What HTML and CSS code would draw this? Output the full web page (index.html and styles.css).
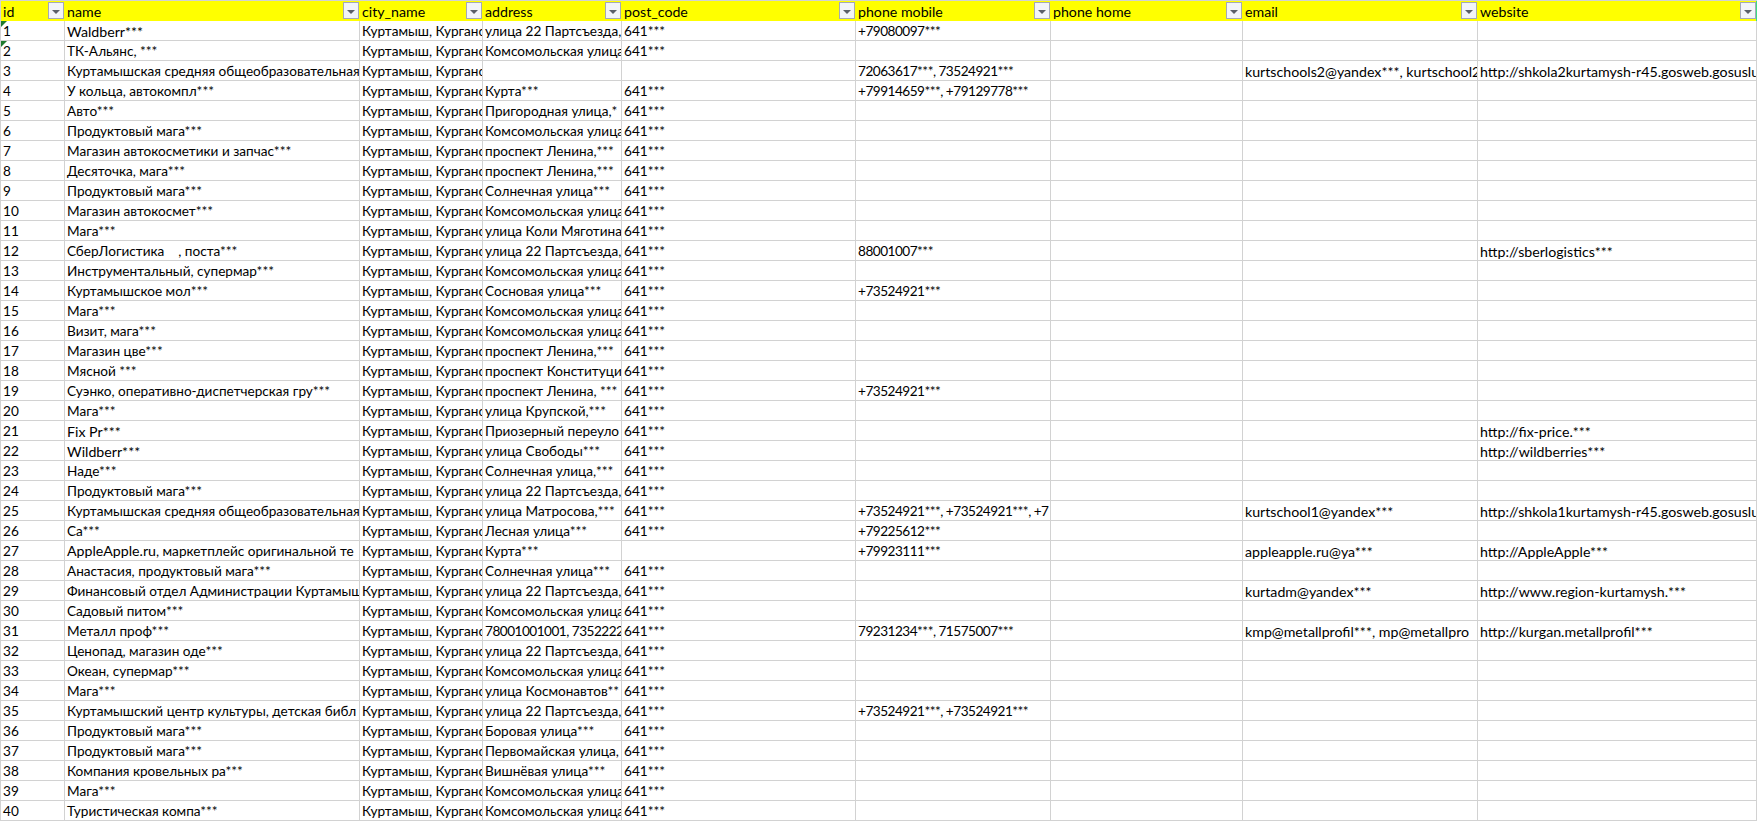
FILE: index.html
```html
<!DOCTYPE html>
<html lang="ru">
<head>
<meta charset="utf-8">
<title>Куртамыш</title>
<link rel="stylesheet" href="styles.css">
</head>
<body>
<table class="sheet">
<colgroup><col class="c-id"><col class="c-name"><col class="c-city"><col class="c-addr"><col class="c-post"><col class="c-mob"><col class="c-home"><col class="c-mail"><col class="c-web"></colgroup>
<thead>
<tr>
<th><div class="head"><span class="label">id</span><span class="filter"></span></div></th>
<th><div class="head"><span class="label">name</span><span class="filter"></span></div></th>
<th><div class="head"><span class="label">city_name</span><span class="filter"></span></div></th>
<th><div class="head"><span class="label">address</span><span class="filter"></span></div></th>
<th><div class="head"><span class="label">post_code</span><span class="filter"></span></div></th>
<th><div class="head"><span class="label">phone mobile</span><span class="filter"></span></div></th>
<th><div class="head"><span class="label">phone home</span><span class="filter"></span></div></th>
<th><div class="head"><span class="label">email</span><span class="filter"></span></div></th>
<th><div class="head"><span class="label">website</span><span class="filter"></span></div></th>
</tr>
</thead>
<tbody>
<tr><td class="flag">1</td><td class="en">Waldberr***</td><td>Куртамыш, Курганс</td><td>улица 22 Партсъезда,</td><td>641***</td><td>+79080097***</td><td></td><td></td><td></td></tr>
<tr><td class="flag">2</td><td>ТК-Альянс, ***</td><td>Куртамыш, Курганс</td><td>Комсомольская улица</td><td>641***</td><td></td><td></td><td></td><td></td></tr>
<tr><td>3</td><td>Куртамышская средняя общеобразовательная</td><td>Куртамыш, Курганс</td><td></td><td></td><td>72063617***, 73524921***</td><td></td><td>kurtschools2@yandex***, kurtschool2</td><td>http://shkola2kurtamysh-r45.gosweb.gosuslu</td></tr>
<tr><td>4</td><td>У кольца, автокомпл***</td><td>Куртамыш, Курганс</td><td>Курта***</td><td>641***</td><td>+79914659***, +79129778***</td><td></td><td></td><td></td></tr>
<tr><td>5</td><td>Авто***</td><td>Куртамыш, Курганс</td><td>Пригородная улица,*</td><td>641***</td><td></td><td></td><td></td><td></td></tr>
<tr><td>6</td><td>Продуктовый мага***</td><td>Куртамыш, Курганс</td><td>Комсомольская улица</td><td>641***</td><td></td><td></td><td></td><td></td></tr>
<tr><td>7</td><td>Магазин автокосметики и запчас***</td><td>Куртамыш, Курганс</td><td>проспект Ленина,***</td><td>641***</td><td></td><td></td><td></td><td></td></tr>
<tr><td>8</td><td>Десяточка, мага***</td><td>Куртамыш, Курганс</td><td>проспект Ленина,***</td><td>641***</td><td></td><td></td><td></td><td></td></tr>
<tr><td>9</td><td>Продуктовый мага***</td><td>Куртамыш, Курганс</td><td>Солнечная улица***</td><td>641***</td><td></td><td></td><td></td><td></td></tr>
<tr><td>10</td><td>Магазин автокосмет***</td><td>Куртамыш, Курганс</td><td>Комсомольская улица</td><td>641***</td><td></td><td></td><td></td><td></td></tr>
<tr><td>11</td><td>Мага***</td><td>Куртамыш, Курганс</td><td>улица Коли Мяготина</td><td>641***</td><td></td><td></td><td></td><td></td></tr>
<tr><td>12</td><td>СберЛогистика &nbsp; &nbsp;, поста***</td><td>Куртамыш, Курганс</td><td>улица 22 Партсъезда,</td><td>641***</td><td>88001007***</td><td></td><td></td><td>http://sberlogistics***</td></tr>
<tr><td>13</td><td>Инструментальный, супермар***</td><td>Куртамыш, Курганс</td><td>Комсомольская улица</td><td>641***</td><td></td><td></td><td></td><td></td></tr>
<tr><td>14</td><td>Куртамышское мол***</td><td>Куртамыш, Курганс</td><td>Сосновая улица***</td><td>641***</td><td>+73524921***</td><td></td><td></td><td></td></tr>
<tr><td>15</td><td>Мага***</td><td>Куртамыш, Курганс</td><td>Комсомольская улица</td><td>641***</td><td></td><td></td><td></td><td></td></tr>
<tr><td>16</td><td>Визит, мага***</td><td>Куртамыш, Курганс</td><td>Комсомольская улица</td><td>641***</td><td></td><td></td><td></td><td></td></tr>
<tr><td>17</td><td>Магазин цве***</td><td>Куртамыш, Курганс</td><td>проспект Ленина,***</td><td>641***</td><td></td><td></td><td></td><td></td></tr>
<tr><td>18</td><td>Мясной ***</td><td>Куртамыш, Курганс</td><td>проспект Конституци</td><td>641***</td><td></td><td></td><td></td><td></td></tr>
<tr><td>19</td><td>Суэнко, оперативно-диспетчерская гру***</td><td>Куртамыш, Курганс</td><td>проспект Ленина, ***</td><td>641***</td><td>+73524921***</td><td></td><td></td><td></td></tr>
<tr><td>20</td><td>Мага***</td><td>Куртамыш, Курганс</td><td>улица Крупской,***</td><td>641***</td><td></td><td></td><td></td><td></td></tr>
<tr><td>21</td><td class="en">Fix Pr***</td><td>Куртамыш, Курганс</td><td>Приозерный переуло</td><td>641***</td><td></td><td></td><td></td><td>http://fix-price.***</td></tr>
<tr><td>22</td><td class="en">Wildberr***</td><td>Куртамыш, Курганс</td><td>улица Свободы***</td><td>641***</td><td></td><td></td><td></td><td>http://wildberries***</td></tr>
<tr><td>23</td><td>Наде***</td><td>Куртамыш, Курганс</td><td>Солнечная улица,***</td><td>641***</td><td></td><td></td><td></td><td></td></tr>
<tr><td>24</td><td>Продуктовый мага***</td><td>Куртамыш, Курганс</td><td>улица 22 Партсъезда,</td><td>641***</td><td></td><td></td><td></td><td></td></tr>
<tr><td>25</td><td>Куртамышская средняя общеобразовательная</td><td>Куртамыш, Курганс</td><td>улица Матросова,***</td><td>641***</td><td>+73524921***, +73524921***, +7</td><td></td><td>kurtschool1@yandex***</td><td>http://shkola1kurtamysh-r45.gosweb.gosuslu</td></tr>
<tr><td>26</td><td>Са***</td><td>Куртамыш, Курганс</td><td>Лесная улица***</td><td>641***</td><td>+79225612***</td><td></td><td></td><td></td></tr>
<tr><td>27</td><td><span class="en">AppleApple.ru</span>, маркетплейс оригинальной те</td><td>Куртамыш, Курганс</td><td>Курта***</td><td></td><td>+79923111***</td><td></td><td>appleapple.ru@ya***</td><td>http://AppleApple***</td></tr>
<tr><td>28</td><td>Анастасия, продуктовый мага***</td><td>Куртамыш, Курганс</td><td>Солнечная улица***</td><td>641***</td><td></td><td></td><td></td><td></td></tr>
<tr><td>29</td><td>Финансовый отдел Администрации Куртамыш</td><td>Куртамыш, Курганс</td><td>улица 22 Партсъезда,</td><td>641***</td><td></td><td></td><td>kurtadm@yandex***</td><td>http://www.region-kurtamysh.***</td></tr>
<tr><td>30</td><td>Садовый питом***</td><td>Куртамыш, Курганс</td><td>Комсомольская улица</td><td>641***</td><td></td><td></td><td></td><td></td></tr>
<tr><td>31</td><td>Металл проф***</td><td>Куртамыш, Курганс</td><td class="tight">78001001001, 7352222</td><td>641***</td><td>79231234***, 71575007***</td><td></td><td>kmp@metallprofil***, mp@metallpro</td><td>http://kurgan.metallprofil***</td></tr>
<tr><td>32</td><td>Ценопад, магазин оде***</td><td>Куртамыш, Курганс</td><td>улица 22 Партсъезда,</td><td>641***</td><td></td><td></td><td></td><td></td></tr>
<tr><td>33</td><td>Океан, супермар***</td><td>Куртамыш, Курганс</td><td>Комсомольская улица</td><td>641***</td><td></td><td></td><td></td><td></td></tr>
<tr><td>34</td><td>Мага***</td><td>Куртамыш, Курганс</td><td>улица Космонавтов**</td><td>641***</td><td></td><td></td><td></td><td></td></tr>
<tr><td>35</td><td>Куртамышский центр культуры, детская библ</td><td>Куртамыш, Курганс</td><td>улица 22 Партсъезда,</td><td>641***</td><td>+73524921***, +73524921***</td><td></td><td></td><td></td></tr>
<tr><td>36</td><td>Продуктовый мага***</td><td>Куртамыш, Курганс</td><td>Боровая улица***</td><td>641***</td><td></td><td></td><td></td><td></td></tr>
<tr><td>37</td><td>Продуктовый мага***</td><td>Куртамыш, Курганс</td><td>Первомайская улица,</td><td>641***</td><td></td><td></td><td></td><td></td></tr>
<tr><td>38</td><td>Компания кровельных ра***</td><td>Куртамыш, Курганс</td><td>Вишнёвая улица***</td><td>641***</td><td></td><td></td><td></td><td></td></tr>
<tr><td>39</td><td>Мага***</td><td>Куртамыш, Курганс</td><td>Комсомольская улица</td><td>641***</td><td></td><td></td><td></td><td></td></tr>
<tr><td>40</td><td>Туристическая компа***</td><td>Куртамыш, Курганс</td><td>Комсомольская улица</td><td>641***</td><td></td><td></td><td></td><td></td></tr>
</tbody>
</table>
</body>
</html>
```
FILE: styles.css
```css
* { box-sizing: border-box; }
html, body { margin: 0; padding: 0; background: #fff; overflow: hidden; }
body { font-family: "Lato", "Open Sans", "Liberation Sans", sans-serif; font-size: 13.6px; color: #000; }

.sheet {
  table-layout: fixed;
  border-collapse: separate;
  border-spacing: 0;
  width: 1757px;
  border-left: 1px solid #d2d2d2;
  border-top: 1px solid #d2d2d2;
}
.c-id { width: 64px; }
.c-name { width: 295px; }
.c-city { width: 123px; }
.c-addr { width: 139px; }
.c-post { width: 234px; }
.c-mob { width: 195px; }
.c-home { width: 192px; }
.c-mail { width: 235px; }
.c-web { width: 279px; }

th {
  height: 20px;
  padding: 0;
  background: #ffff00;
  font-weight: 400;
  text-align: left;
  font-size: 14.2px;
}
th:last-child { border-right: 1px solid #3ddc84; }
.head {
  display: flex;
  align-items: center;
  justify-content: space-between;
  height: 20px;
  padding: 0 1px 1px 2px;
}
th:last-child .head { padding-right: 0; }
.label { padding-top: 2px; }
.filter {
  flex: none;
  display: flex;
  align-items: center;
  justify-content: center;
  width: 16px;
  height: 17px;
  border: 1px solid #a4a9b6;
  background: #f2f4f8;
}
.filter::after {
  content: "";
  margin-top: 2px;
  border-left: 4px solid transparent;
  border-right: 4px solid transparent;
  border-top: 4px solid #5a5f68;
}

td {
  height: 20px;
  padding: 0 0 0 2px;
  border-right: 1px solid #d2d2d2;
  border-bottom: 1px solid #d2d2d2;
  white-space: pre;
  overflow: hidden;
  line-height: 17px;
  vertical-align: bottom;
}
td:nth-child(6), .tight { letter-spacing: -0.5px; }
td:nth-child(8), td:nth-child(9), .en { font-size: 14.2px; }
.flag { position: relative; }
.flag::before {
  content: "";
  position: absolute;
  left: 0;
  top: 0;
  border-top: 6px solid #1f7a2e;
  border-right: 6px solid transparent;
}
```
